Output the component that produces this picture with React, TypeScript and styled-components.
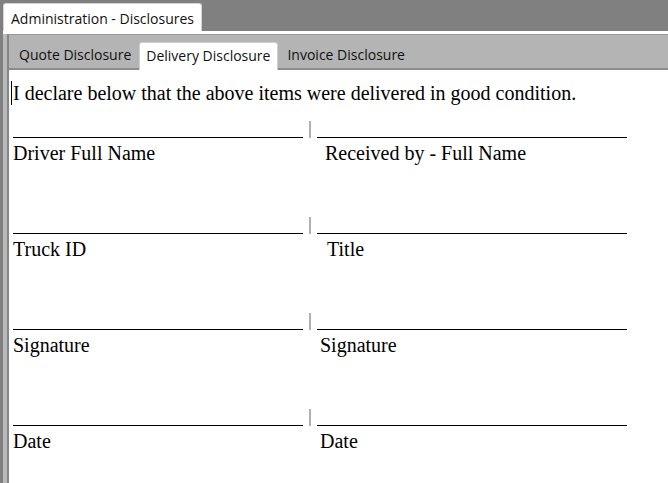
import React from "react";
import styled, { createGlobalStyle } from "styled-components";

const Global = createGlobalStyle`
  html, body { margin: 0; padding: 0; }
  body { width: 668px; height: 483px; overflow: hidden; background: #808080; }
`;

const Window = styled.div`
  width: 668px;
  height: 483px;
  display: flex;
  flex-direction: column;
  background: #808080;
  overflow: hidden;
`;

const OuterStrip = styled.div`
  flex-shrink: 0;
  height: 31px;
  box-sizing: border-box;
  padding: 3px 0 0 3px;
  display: flex;
  align-items: flex-end;
`;

const OuterTab = styled.div`
  height: 28px;
  box-sizing: border-box;
  padding: 5px 7px 0 7px;
  background: #ffffff;
  border: 1px solid #d4d4d4;
  border-bottom: none;
  border-radius: 3px 3px 0 0;
  font-family: "Open Sans", "Noto Sans", sans-serif;
  font-size: 14px;
  line-height: 19px;
  color: #111;
  white-space: nowrap;
`;

const OuterPanel = styled.div`
  flex: 1;
  display: flex;
  margin-left: 3px;
  border-top: 3px solid #ffffff;
  background: #b9b9b9;
  padding-left: 4px;
  min-height: 0;
`;

const InnerPanel = styled.div`
  flex: 1;
  display: flex;
  flex-direction: column;
  border-left: 2px solid #858585;
  border-top: 1px solid #9a9a9a;
  min-height: 0;
`;

const TabBar = styled.div`
  flex-shrink: 0;
  height: 35px;
  box-sizing: border-box;
  background: #b4b4b4;
  border-bottom: 2px solid #8c8c8c;
  display: flex;
  align-items: flex-end;
  padding-left: 3px;
`;

const Tab = styled.div<{ $active?: boolean }>`
  height: ${(p) => (p.$active ? "28px" : "27px")};
  margin: ${(p) => (p.$active ? "0 2px -2px 1px" : "0")};
  box-sizing: border-box;
  padding: ${(p) => (p.$active ? "3px 7px 0 6px" : "4px 7px 0 7px")};
  background: ${(p) => (p.$active ? "#ffffff" : "transparent")};
  border: ${(p) => (p.$active ? "1px solid #cfcfcf" : "none")};
  border-bottom: none;
  border-radius: 3px 3px 0 0;
  font-family: "Open Sans", "Noto Sans", sans-serif;
  font-size: 14px;
  line-height: 19px;
  color: #111;
  white-space: nowrap;
  position: relative;
`;

const Content = styled.div`
  flex: 1;
  background: #ffffff;
  padding: 11px 0 0 2px;
  font-family: "Liberation Serif", "Times New Roman", serif;
  font-size: 20px;
  color: #000;
`;

const Sentence = styled.div`
  line-height: 24px;
  height: 24px;
  white-space: nowrap;
  display: flex;
  align-items: stretch;
`;

const Caret = styled.span`
  width: 1px;
  background: #000;
  margin-right: 1px;
`;

const FormGrid = styled.div`
  margin-top: 16px;
  padding-left: 2px;
  display: grid;
  grid-template-columns: 290px 14px 310px;
  grid-auto-rows: 96px;
  align-items: start;
`;

const Field = styled.div`
  display: flex;
  flex-direction: column;
`;

const SignLine = styled.div`
  height: 17px;
  box-sizing: border-box;
  border-bottom: 1px solid #000;
`;

const Label = styled.div<{ $indent?: number }>`
  margin-top: 3px;
  padding-left: ${(p) => p.$indent ?? 0}px;
  line-height: 24px;
  white-space: nowrap;
`;

const Divider = styled.div`
  justify-self: center;
  width: 2px;
  height: 17px;
  background: #b0b0b0;
`;

const rows: { left: string; right: string; rightIndent: number }[] = [
  { left: "Driver Full Name", right: "Received by - Full Name", rightIndent: 8 },
  { left: "Truck ID", right: "Title", rightIndent: 10 },
  { left: "Signature", right: "Signature", rightIndent: 3 },
  { left: "Date", right: "Date", rightIndent: 3 },
];

export default function App() {
  return (
    <Window>
      <Global />
      <OuterStrip>
        <OuterTab>Administration - Disclosures</OuterTab>
      </OuterStrip>
      <OuterPanel>
        <InnerPanel>
          <TabBar>
            <Tab>Quote Disclosure</Tab>
            <Tab $active>Delivery Disclosure</Tab>
            <Tab>Invoice Disclosure</Tab>
          </TabBar>
          <Content>
            <Sentence>
              <Caret />
              I declare below that the above items were delivered in good condition.
            </Sentence>
            <FormGrid>
              {rows.map((r) => (
                <React.Fragment key={r.left}>
                  <Field>
                    <SignLine />
                    <Label>{r.left}</Label>
                  </Field>
                  <Divider />
                  <Field>
                    <SignLine />
                    <Label $indent={r.rightIndent}>{r.right}</Label>
                  </Field>
                </React.Fragment>
              ))}
            </FormGrid>
          </Content>
        </InnerPanel>
      </OuterPanel>
    </Window>
  );
}
